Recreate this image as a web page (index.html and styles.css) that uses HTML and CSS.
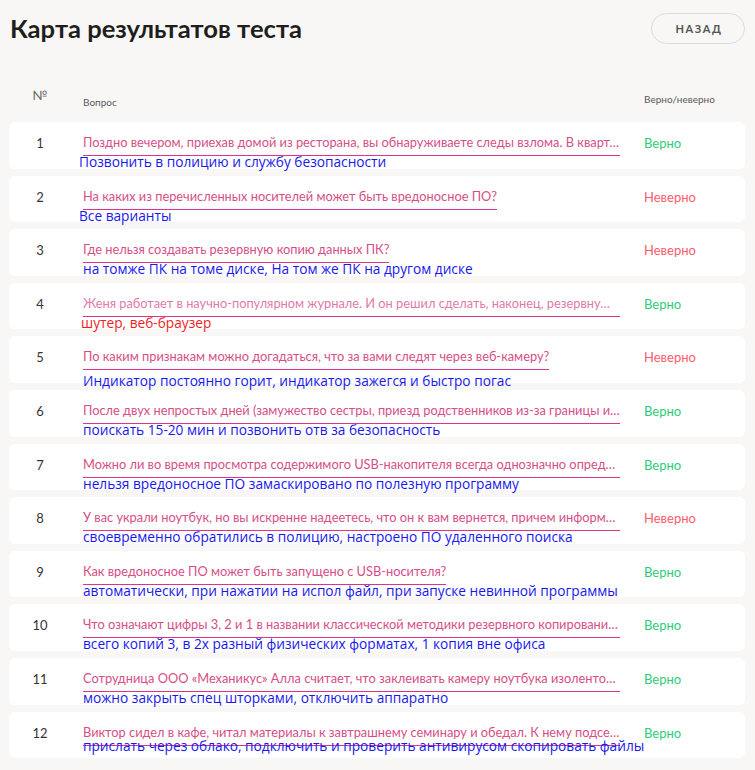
FILE: index.html
```html
<!DOCTYPE html>
<html lang="ru">
<head>
<meta charset="utf-8">
<title>Карта результатов теста</title>
<link rel="stylesheet" href="styles.css">
</head>
<body>
<div class="page">
  <header class="topbar">
    <h1 class="title">Карта результатов теста</h1>
    <button class="back-btn">НАЗАД</button>
  </header>

  <div class="thead">
    <div class="th th-num">№</div>
    <div class="th th-q">Вопрос</div>
    <div class="th th-res">Верно/неверно</div>
  </div>

  <div class="rows">
    <div class="row">
      <div class="num">1</div>
      <div class="qcell">
        <span class="q q-full">Поздно вечером, приехав домой из ресторана, вы обнаруживаете следы взлома. В кварт…</span>
        <div class="ans ans-left">Позвонить в полицию и службу безопасности</div>
      </div>
      <div class="res ok">Верно</div>
    </div>
    <div class="row">
      <div class="num">2</div>
      <div class="qcell">
        <span class="q">На каких из перечисленных носителей может быть вредоносное ПО?</span>
        <div class="ans ans-left">Все варианты</div>
      </div>
      <div class="res bad">Неверно</div>
    </div>
    <div class="row">
      <div class="num">3</div>
      <div class="qcell">
        <span class="q">Где нельзя создавать резервную копию данных ПК?</span>
        <div class="ans">на томже ПК на томе диске, На том же ПК на другом диске</div>
      </div>
      <div class="res bad">Неверно</div>
    </div>
    <div class="row">
      <div class="num">4</div>
      <div class="qcell">
        <span class="q q-full q-light">Женя работает в научно-популярном журнале. И он решил сделать, наконец, резервну…</span>
        <div class="ans ans-red">шутер, веб-браузер</div>
      </div>
      <div class="res ok">Верно</div>
    </div>
    <div class="row">
      <div class="num">5</div>
      <div class="qcell">
        <span class="q">По каким признакам можно догадаться, что за вами следят через веб-камеру?</span>
        <div class="ans ans-low">Индикатор постоянно горит, индикатор зажегся и быстро погас</div>
      </div>
      <div class="res bad">Неверно</div>
    </div>
    <div class="row">
      <div class="num">6</div>
      <div class="qcell">
        <span class="q q-full">После двух непростых дней (замужество сестры, приезд родственников из-за границы и…</span>
        <div class="ans">поискать 15-20 мин и позвонить отв за безопасность</div>
      </div>
      <div class="res ok">Верно</div>
    </div>
    <div class="row">
      <div class="num">7</div>
      <div class="qcell">
        <span class="q q-full">Можно ли во время просмотра содержимого USB-накопителя всегда однозначно опред…</span>
        <div class="ans">нельзя вредоносное ПО замаскировано по полезную программу</div>
      </div>
      <div class="res ok">Верно</div>
    </div>
    <div class="row">
      <div class="num">8</div>
      <div class="qcell">
        <span class="q q-full">У вас украли ноутбук, но вы искренне надеетесь, что он к вам вернется, причем информ…</span>
        <div class="ans">своевременно обратились в полицию, настроено ПО удаленного поиска</div>
      </div>
      <div class="res bad">Неверно</div>
    </div>
    <div class="row">
      <div class="num">9</div>
      <div class="qcell">
        <span class="q">Как вредоносное ПО может быть запущено с USB-носителя?</span>
        <div class="ans">автоматически, при нажатии на испол файл, при запуске невинной программы</div>
      </div>
      <div class="res ok">Верно</div>
    </div>
    <div class="row">
      <div class="num">10</div>
      <div class="qcell">
        <span class="q q-full">Что означают цифры 3, 2 и 1 в названии классической методики резервного копировани…</span>
        <div class="ans">всего копий 3, в 2х разный физических форматах, 1 копия вне офиса</div>
      </div>
      <div class="res ok">Верно</div>
    </div>
    <div class="row">
      <div class="num">11</div>
      <div class="qcell">
        <span class="q q-full">Сотрудница ООО «Механикус» Алла считает, что заклеивать камеру ноутбука изоленто…</span>
        <div class="ans">можно закрыть спец шторками, отключить аппаратно</div>
      </div>
      <div class="res ok">Верно</div>
    </div>
    <div class="row">
      <div class="num">12</div>
      <div class="qcell">
        <span class="q q-full">Виктор сидел в кафе, читал материалы к завтрашнему семинару и обедал. К нему подсе…</span>
        <div class="ans ans-high">прислать через облако, подключить и проверить антивирусом скопировать файлы</div>
      </div>
      <div class="res ok">Верно</div>
    </div>
  </div>
</div>
</body>
</html>
```

FILE: styles.css
```css
* { box-sizing: border-box; }

html, body {
  margin: 0;
  padding: 0;
  background: #f8f7f5;
}

body {
  font-family: Lato, "Noto Sans", sans-serif;
  color: #2a2a2a;
}

.page {
  width: 755px;
  padding: 13px 10px 0 9px;
}

.topbar {
  display: flex;
  justify-content: space-between;
  align-items: center;
  height: 31px;
}

.title {
  margin: 0 0 0 1px;
  font-size: 25.6px;
  font-weight: 700;
  color: #1e1e1e;
  line-height: 31px;
}

.back-btn {
  width: 94px;
  height: 31px;
  border: 1px solid #dcdad7;
  border-radius: 16px;
  background: transparent;
  font-family: Lato, sans-serif;
  font-weight: 700;
  font-size: 11px;
  letter-spacing: 1.6px;
  color: #555;
  padding: 0 0 0 2px;
}

.thead,
.row {
  display: grid;
  grid-template-columns: 62px 537px 1fr;
  column-gap: 12px;
}

.thead {
  margin-top: 43px;
  height: 35px;
  align-items: start;
}

.th {
  font-size: 10px;
  color: #5a5a5a;
}

.th-num {
  text-align: center;
  font-size: 13px;
  color: #666;
  line-height: 16px;
}

.th-q {
  padding-top: 9px;
}

.th-res {
  padding-left: 12px;
  padding-top: 6px;
}

.rows {
  display: flex;
  flex-direction: column;
  gap: 7px;
}

.row {
  background: #ffffff;
  border-radius: 6px;
  height: 46.6px;
  padding-top: 12px;
  align-items: start;
}

.num {
  text-align: center;
  font-size: 13px;
  line-height: 18px;
  color: #333;
}

.qcell {
  min-width: 0;
}

.q {
  display: inline-block;
  white-space: nowrap;
  font-size: 12.8px;
  line-height: 16px;
  color: #d64e88;
  padding-bottom: 5px;
  border-bottom: 1px solid #d9358f;
  vertical-align: top;
}

.q-full {
  width: 537px;
}

.q-light {
  color: #e07aaa;
}

.ans {
  font-family: "Open Sans", "Noto Sans", sans-serif;
  font-size: 13.7px;
  font-weight: 500;
  line-height: 16px;
  color: #1818ee;
  white-space: nowrap;
  margin-top: -2px;
}

.ans-left { margin-left: -4px; }
.ans-red { color: #f01e1e; margin-left: -2px; }
.ans-low { margin-top: 3px; }
.ans-high { margin-top: -8px; }

.res {
  padding-left: 12px;
  font-size: 13px;
  line-height: 18px;
}

.ok { color: #2ecc78; }
.bad { color: #ff5a6a; }
```
